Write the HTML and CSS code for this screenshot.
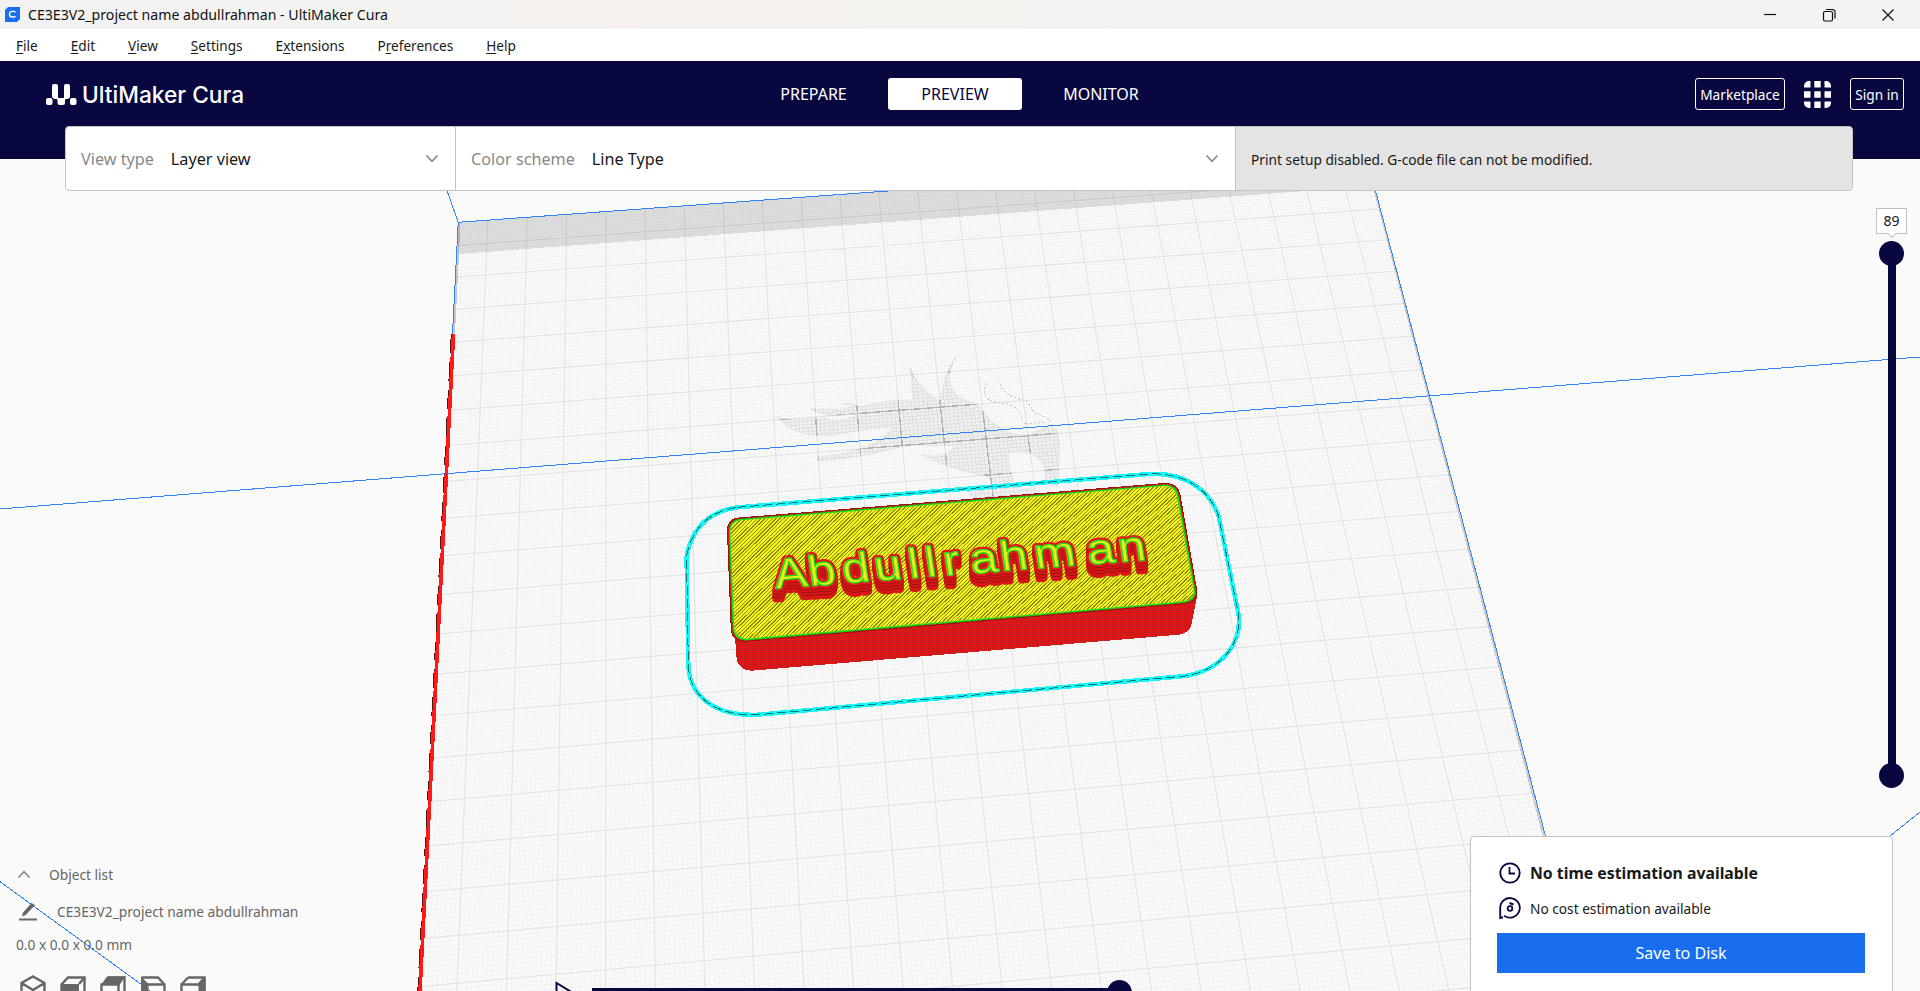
FILE: index.html
```html
<!DOCTYPE html>
<html lang="en">
<head>
<meta charset="utf-8">
<title>CE3E3V2_project name abdullrahman - UltiMaker Cura</title>
<link rel="stylesheet" href="styles.css">
</head>
<body>
<div class="app">
  <div class="titlebar">
    <svg class="app-icon" width="15" height="15" viewBox="0 0 15 15"><path d="M3 0H15V12L12 15H0V3Z" fill="#196ef0"/><path d="M10.5 5.2A3 3 0 0 0 8.700 4.400H7.300A2.800 2.800 0 0 0 7.300 10H8.700A3 3 0 0 0 10.500 9.200" fill="none" stroke="#fff" stroke-width="1.400"/></svg>
    <span class="title">CE3E3V2_project name abdullrahman - UltiMaker Cura</span>
    <div class="window-controls">
      <svg width="14" height="14" viewBox="0 0 14 14"><path d="M1 6.500H13" /></svg>
      <svg width="14" height="14" viewBox="0 0 14 14"><rect x="1.500" y="3.500" width="9" height="9.500" rx="1.500"/><path d="M4 1.500H10.500A2.500 2.500 0 0 1 13 4V10.500"/></svg>
      <svg width="14" height="14" viewBox="0 0 14 14"><path d="M1.500 1.500L12.500 12.500M12.500 1.500L1.500 12.500"/></svg>
    </div>
  </div>
  <nav class="menubar">
    <span><u>F</u>ile</span><span><u>E</u>dit</span><span><u>V</u>iew</span><span><u>S</u>ettings</span><span>E<u>x</u>tensions</span><span>P<u>r</u>eferences</span><span><u>H</u>elp</span>
  </nav>
  <header class="header">
    <div class="brand">
      <svg width="31" height="21" viewBox="0 0 31 21" fill="#fff"><rect x="0" y="14" width="6.500" height="7" rx="2"/><rect x="24" y="14" width="6.500" height="7" rx="2"/><path d="M6 2a2 2 0 0 1 2-2h2a2 2 0 0 1 2 2v11c0 1 1 1 1.500 1h3.500c.500 0 1 0 1-1V2a2 2 0 0 1 2-2h2a2 2 0 0 1 2 2v10c0 2-1 3-3 3-1 0-2 0-2 1v3a2 2 0 0 1-2 2h-3.500a2 2 0 0 1-2-2v-3c0-1-1-1-2-1-2 0-3.500-1-3.500-3Z"/></svg>
      <span class="brand-name">UltiMaker Cura</span>
    </div>
    <div class="stages">
      <span class="stage">PREPARE</span><span class="stage active">PREVIEW</span><span class="stage">MONITOR</span>
    </div>
    <div class="account">
      <span class="outline market">Marketplace</span>
      <svg width="27" height="27" viewBox="0 0 27 27" fill="#fff"><path d="M0 6.500V5A5 5 0 0 1 5 0H6.500V6.500ZM10.300 0h6.400v6.500h-6.400ZM20.500 0H22a5 5 0 0 1 5 5V6.500H20.500ZM0 10.300h6.500v6.400H0ZM10.300 10.300h6.400v6.400h-6.400ZM20.500 10.300H27v6.400H20.500ZM0 20.500H6.500V27H5A5 5 0 0 1 0 22ZM10.300 20.500h6.400V27h-6.400ZM20.500 20.500H27V22a5 5 0 0 1-5 5H20.500Z"/></svg>
      <span class="outline signin">Sign in</span>
    </div>
  </header>
  <main class="viewport">
    <svg class="scene" width="1920" height="832" viewBox="0 159 1920 832">
      <defs>
        <pattern id="wall" width="2" height="2" patternUnits="userSpaceOnUse" patternTransform="scale(2.6133 3)"><rect width="2" height="2" fill="#f01919"/><rect width="1" height="1" fill="#b81414"/><rect x="1" y="1" width="1" height="1" fill="#d01616"/></pattern>
        <clipPath id="topClip"><path transform="translate(680 340) scale(.38265 .33333)" d="M160 541L1268 438Q1292 440 1298 466L1343 755Q1343 778 1316 784L174 896Q147 895 142 866L132 574Q134 544 160 541Z"/></clipPath>
        <path id="dragonShape" transform="translate(680 340) scale(.38265 .33333)" d="M252 228C290 245 330 238 378 232C400 250 440 238 462 222L400 228C370 222 350 215 338 203C370 212 420 210 455 197L415 190C450 188 465 198 478 200C510 184 560 180 608 182L602 85C620 135 650 165 678 180L686 150C690 115 700 90 718 55C704 100 702 120 706 135C720 170 745 185 775 190C795 215 805 240 840 265C860 280 885 288 905 284C935 275 950 262 970 255C985 265 992 285 992 310L990 440L957 432C955 400 950 370 935 352C920 338 890 334 862 338C850 365 870 390 872 430L892 446L925 442L925 462L760 475L750 450L812 442L808 412C770 400 700 385 662 362L628 345C660 348 700 352 716 318C660 318 610 314 575 322C500 345 440 358 360 364L358 350C420 345 470 332 520 300L560 262C500 266 450 276 410 286C350 292 300 280 275 255Z"/>
        <clipPath id="dragonClip"><use href="#dragonShape"/></clipPath>
      </defs>
      <path id="plate" class="plate"/>
      <path id="minor" class="minor"/>
      <path id="major" class="major"/>
      <g clip-path="url(#dragonClip)">
        <path d="M700 340H1080V520H700Z" class="dragon-fill"/>
        <path id="dragonMinor" class="dragon-minor"/>
        <path id="dragonMajor" class="dragon-major"/>
        <use href="#dragonShape" class="dragon-rim"/>
      </g>
      <g class="dragon-hair" transform="translate(680 340) scale(.38265 .33333)">
        <path d="M800 128C790 160 800 180 825 187C870 190 890 210 892 230Q895 250 910 255M836 132C845 165 880 175 903 182C920 200 920 215 935 224Q968 230 970 255M905 250L950 248M718 55L700 95M602 85L612 115"/>
      </g>
      <path class="shade" d="M458 222L892 190H1320L458 254Z"/>
      <path class="edge-shadow" d="M1375 191L1544 837M459.500 224L454 333"/>
      <path class="volume" d="M446.800 190L458.200 222.300L890.700 190.800M458.200 222.300L452.500 334M1375.600 191L1545.700 837M0 509L1920 357M0 881.700L151 991.500M1920 812L1885 840"/>
      <path d="M453 334L419.500 991" class="prime-dark"/>
      <path d="M453.500 334L420 991" class="prime"/>
      <g transform="translate(680 340) scale(.38265 .33333)">
        <path class="skirt" d="M150 502L1225 402C1330 396 1388 460 1408 530L1460 825C1468 905 1420 990 1320 1008L205 1124C90 1130 30 1070 22 985L17 650C30 570 70 515 150 502Z"/>
        <path class="skirt-line" d="M150 502L1225 402C1330 396 1388 460 1408 530L1460 825C1468 905 1420 990 1320 1008L205 1124C90 1130 30 1070 22 985L17 650C30 570 70 515 150 502Z"/>
        <path class="block-side" d="M122 570L148 955Q154 992 188 992L1305 884Q1333 878 1337 850L1352 765Z"/>
        <path class="block-top-dark" d="M155 534L1270 430Q1300 432 1306 460L1351 755Q1352 785 1320 791L170 904Q138 904 134 870L124 570Q126 536 155 534Z"/>
        <path class="block-rim" d="M158 537L1270 434Q1296 436 1302 462L1347 755Q1348 782 1318 788L172 901Q142 900 138 868L128 572Q130 540 158 537Z"/>
      </g>
      <g clip-path="url(#topClip)">
        <path class="skin" d="M720 480H1205V650H720Z"/>
        <path id="skinLines" class="skin-lines"/>
      </g>
      <g id="letters"></g>
    </svg>

    <section class="toolbar">
      <div class="cell view-type"><span class="label">View type</span><span class="value">Layer view</span><svg class="chev" width="14" height="9" viewBox="0 0 14 9"><path d="M1.500 1.500L7 7.300L12.500 1.500"/></svg></div>
      <div class="cell scheme"><span class="label">Color scheme</span><span class="value">Line Type</span><svg class="chev" width="14" height="9" viewBox="0 0 14 9"><path d="M1.500 1.500L7 7.300L12.500 1.500"/></svg></div>
      <div class="cell disabled"><span>Print setup disabled. G-code file can not be modified.</span></div>
    </section>

    <div class="layer-slider">
      <div class="layer-value">89</div>
      <div class="layer-track"><i class="knob"></i><i class="knob"></i></div>
    </div>

    <section class="objects">
      <div class="obj-head"><svg width="14" height="9" viewBox="0 0 14 9"><path d="M1.500 7.500L7 1.700L12.500 7.500" fill="none" stroke="#888" stroke-width="1.700"/></svg><span>Object list</span></div>
      <div class="obj-name"><svg width="18" height="19" viewBox="0 0 18 19" fill="#666"><path d="M3 14.500L4 10.500L12.500 1L16 3L7 12.800ZM0 16.500H18V18.500H0Z"/></svg><span>CE3E3V2_project name abdullrahman</span></div>
      <div class="obj-dim">0.0 x 0.0 x 0.0 mm</div>
      <div class="view-icons">
        <svg viewBox="0 0 26 28"><path d="M13 1.500L24.500 8V20L13 26.500L1.500 20V8ZM1.500 8L13 15L24.500 8M13 15V26"/></svg>
        <svg viewBox="0 0 26 28"><path d="M8 2.500H24.500V20L18.500 26H1.500V9.500Z"/><path class="solid" d="M1 9H19V27H1Z"/><path d="M19 9L24.500 2.500"/></svg>
        <svg viewBox="0 0 26 28"><path d="M8 2.500H24.500V20L18.500 26H1.500V9.500H18.500V26"/><path class="solid" d="M7 1.500H25.500L19.500 10H1Z"/></svg>
        <svg viewBox="0 0 26 28"><path d="M1.500 2.500H18L24.500 9.500V26H7.500M8 9.500H24.500"/><path class="solid" d="M1 1.500L8.500 9V27H1Z"/></svg>
        <svg viewBox="0 0 26 28"><path d="M8 2.500H24.500V20L18.500 26H1.500V9.500H18.500L24.500 2.500M1.500 9.500L8 2.500"/><path class="solid" d="M18.500 9L25.500 2V20L18.500 27Z"/></svg>
      </div>
    </section>

    <div class="sim">
      <svg width="20" height="24" viewBox="0 0 20 24"><path d="M1.500 2V22L18 12Z" fill="none" stroke="#08073f" stroke-width="2"/></svg>
      <div class="sim-track"><i class="knob"></i></div>
    </div>

    <section class="output">
      <div class="est time"><svg width="22" height="22" viewBox="0 0 22 22"><circle cx="11" cy="11" r="9.700"/><path d="M10.500 5V11.500H16"/></svg><b>No time estimation available</b></div>
      <div class="est cost"><svg width="22" height="22" viewBox="0 0 22 22"><path d="M1.200 22V11A9.800 9.800 0 1 1 5 18.600M1.200 20.500H4"/><circle cx="11" cy="11.500" r="2.300"/><path d="M10.500 6L14.500 7.500" stroke-width="2.200"/></svg><span>No cost estimation available</span></div>
      <div class="save"><span>Save to Disk</span></div>
    </section>
  </main>
</div>
<script src="scene.js"></script>
</body>
</html>
```
FILE: styles.css
```css
* { box-sizing: border-box; }
body { margin: 0; font-family: "Noto Sans", "Open Sans", sans-serif; color: #191919; overflow: hidden; }
.app { width: 1920px; height: 991px; display: flex; flex-direction: column; background: #fafafa; overflow: hidden; }
.app span, .app b, .obj-dim, .layer-value { white-space: nowrap; }

.titlebar { height: 29px; flex: none; display: flex; align-items: center; padding-left: 5px; background: linear-gradient(90deg, #f2f2f2 0, #f3f3f2 380px, #f6f1ee 620px, #f4f2ee 900px, #f3f3f1 1100px, #f3f2f0); }
.title { margin-left: 8px; font-size: 14.13px; color: #111; }
.window-controls { margin-left: auto; margin-right: 25px; display: flex; gap: 45px; }
.window-controls svg { fill: none; stroke: #111; stroke-width: 1.2; }

.menubar { height: 32px; flex: none; display: flex; align-items: center; padding-left: 16px; background: #fff; font-size: 13.6px; gap: 33px; }
.menubar u { text-underline-offset: 2px; }

.header { height: 98px; flex: none; background: #08073f; color: #fff; display: grid; grid-template-columns: 734px 1fr auto; align-items: start; padding: 17px 16px 0 46px; }
.brand { display: flex; align-items: center; height: 32px; gap: 5px; }
.brand-name { font: 500 22.7px "Inter", "Liberation Sans", sans-serif; }
.stages { display: flex; height: 32px; }
.stage { width: 134px; line-height: 32px; text-align: center; font-size: 16px; margin-right: 12px; }
.stage:first-child { width: 67px; margin-right: 41px; }
.stage.active { background: #fff; color: #08073f; border-radius: 3px; }
.account { display: flex; align-items: center; height: 32px; gap: 19px; }
.outline { height: 32px; border: 1px solid #fff; border-radius: 3px; line-height: 31px; text-align: center; font-size: 13.7px; }
.market { width: 90px; }
.signin { width: 54px; }

.viewport { position: relative; flex: 1; }
.scene { position: absolute; inset: 0; shape-rendering: crispEdges; }
.plate { fill: #f9f9f9; }
.minor { stroke: #f3f3f3; stroke-width: 1; fill: none; }
.major { stroke: #e4e4e4; stroke-width: 1.2; fill: none; shape-rendering: auto; }
.dragon-fill { fill: #f0f0f0; }
.dragon-minor { stroke: #e0e0e0; fill: none; }
.dragon-major { stroke: #b4b4b4; stroke-width: 1.4; fill: none; }
.dragon-rim { fill: none; stroke: #e0e0e0; stroke-width: 3; }
.dragon-hair path { stroke: #c8c8c8; fill: none; vector-effect: non-scaling-stroke; stroke-dasharray: 2 2; }
.shade { fill: #000; fill-opacity: .11; }
.edge-shadow { stroke: #000; stroke-opacity: .18; stroke-width: 2; fill: none; }
.volume { stroke: #3282ff; stroke-width: 1; fill: none; }
.prime { stroke: #ff1919; stroke-width: 3.6; }
.prime-dark { stroke: #5a1414; stroke-width: 4.4; stroke-dasharray: 19 9; }
.skirt, .skirt-line, .block-rim, .block-top-dark { vector-effect: non-scaling-stroke; }
.skirt { fill: none; stroke: #19f5f5; stroke-width: 4.4; }
.skirt-line { fill: none; stroke: #0a7a7a; stroke-width: 1; stroke-dasharray: 9 4; }
.block-side { fill: url(#wall); }
.block-top-dark { fill: #e01616; stroke: #a01212; stroke-width: 1; }
.block-rim { fill: #19e019; stroke: #18a018; stroke-width: .5; }
.skin { fill: #f4f41a; }
.skin-lines { stroke: #8c8c10; stroke-width: 1; fill: none; }
.model-text { font: 42px "Liberation Sans", Arial, sans-serif; stroke-linejoin: round; shape-rendering: auto; }
.text-wall { fill: #d81616; stroke: #d81616; stroke-width: 6; }
.text-wall.dark { fill: #981212; stroke: #981212; }
.text-edge { fill: #e41919; stroke: #e41919; stroke-width: 6; }
.text-rim { fill: #19d819; stroke: #19d819; stroke-width: 1.6; }
.text-face { fill: #e6f01a; stroke: #19d819; stroke-width: .9; }

.toolbar { position: absolute; left: 65px; top: -33px; width: 1788px; height: 65px; display: grid; grid-template-columns: 390px 780px 1fr; border: 1px solid #c4c4c4; border-radius: 4px; background: #fff; overflow: hidden; }
.cell { display: flex; align-items: center; padding: 0 16px 0 15px; border-right: 1px solid #c4c4c4; font-size: 16.2px; }
.cell:last-child { border-right: 0; }
.label { color: #888; margin-right: 17px; }
.chev { margin-left: auto; fill: none; stroke: #888; stroke-width: 1.7; }
.disabled { background: #e4e4e4; font-size: 13.75px; padding-top: 2px; }

.layer-slider { position: absolute; left: 1876px; top: 49px; width: 31px; display: flex; flex-direction: column; align-items: center; gap: 7px; }
.layer-value { position: relative; width: 31px; height: 26px; background: #fff; border: 1px solid #c0c0c0; font-size: 14px; line-height: 24px; text-align: center; }
.layer-value::after { content: ""; position: absolute; left: 12px; top: 22px; width: 5px; height: 5px; background: #fff; border: solid #c0c0c0; border-width: 0 1px 1px 0; transform: rotate(45deg); }
.layer-track { width: 8px; height: 547px; display: flex; flex-direction: column; justify-content: space-between; align-items: center; background: linear-gradient(#08073f, #08073f) 0 12px / 8px 523px no-repeat; }
.knob { width: 25px; height: 25px; flex: none; border-radius: 50%; background: #08073f; }

.objects { position: absolute; left: 16px; bottom: -12px; display: flex; flex-direction: column; color: #666; font-size: 13.73px; }
.obj-head { display: flex; align-items: center; height: 24px; padding-left: 1px; gap: 18px; }
.obj-name { display: flex; align-items: center; height: 26px; margin-top: 12px; padding-left: 3px; gap: 20px; }
.obj-dim { height: 24px; line-height: 24px; margin-top: 9px; }
.view-icons { display: flex; gap: 14px; margin: 18px 0 0 4px; }
.view-icons svg { width: 26px; height: 28px; fill: none; stroke: #666; stroke-width: 2.4; }
.view-icons .solid { fill: #666; stroke: none; }

.sim { position: absolute; left: 555px; bottom: -14px; display: flex; align-items: center; gap: 17px; }
.sim-track { width: 540px; height: 25px; display: flex; justify-content: flex-end; background: linear-gradient(#08073f, #08073f) 0 8px / 526px 8px no-repeat; }

.output { position: absolute; left: 1470px; top: 677px; width: 423px; height: 170px; background: #fff; border: 1px solid #c4c4c4; border-radius: 4px; padding: 22px 27px 0 26px; }
.est { display: flex; align-items: center; gap: 9px; height: 28px; padding-left: 2px; }
.est svg { fill: none; stroke: #08073f; stroke-width: 1.8; }
.time { font-size: 15.8px; }
.cost { font-size: 13.7px; margin-top: 7px; }
.save { margin-top: 11px; height: 40px; background: #196ef0; color: #fff; font-size: 16.1px; line-height: 40px; text-align: center; }
```
FILE: scene.js
```javascript
// Perspective projection of the 235 x 235 mm build plate, measured from its back-left corner.
function project(u, v) {
  var w = 1 + 0.0000987 * u - 0.0010397 * v;
  return ((458.2 + 3.9986 * u - 0.6308 * v) / w).toFixed(2) + " " +
         ((222.3 - 0.2641 * u + 2.8445 * v) / w).toFixed(2);
}
var SIZE = 235;
function gridPath(start, step) {
  var d = "";
  for (var t = start; t < SIZE; t += step) {
    d += "M" + project(t, 0) + "L" + project(t, SIZE) + "M" + project(0, t) + "L" + project(SIZE, t);
  }
  return d;
}
function setPath(id, d) { document.getElementById(id).setAttribute("d", d); }

setPath("plate", "M" + project(0, 0) + "L" + project(SIZE, 0) + "L" + project(SIZE, SIZE) + "L" + project(0, SIZE) + "Z");
var minor = gridPath(0.5, 1), major = gridPath(7.5, 10);
setPath("minor", minor);
setPath("major", major);
setPath("dragonMinor", minor);
setPath("dragonMajor", major);

// Diagonal skin lines on the top face.
var skin = "";
for (var k = 0; k < 185; k += 1) {
  skin += "M" + (720 + k * 3.8).toFixed(1) + " 480L" + (550 + k * 3.75).toFixed(1) + " 650";
}
setPath("skinLines", skin);

// Raised lettering: stacked wall layers, then the outlined top face.
var letters = document.getElementById("letters");
var xs = [-1, 33, 67, 99, 133, 150, 168, 195, 225, 259, 312, 343].map(function (x) {
  return (x / 1.17).toFixed(1);
}).join(" ");
function addText(cls, dy) {
  var t = document.createElementNS("http://www.w3.org/2000/svg", "text");
  t.setAttribute("class", "model-text " + cls);
  t.setAttribute("x", xs);
  t.setAttribute("transform", "matrix(1.17 -.0907 .15 1 777 " + (588.5 + dy) + ")");
  t.textContent = "Abdullrahman";
  if (dy) t.setAttribute("aria-hidden", "true");
  letters.appendChild(t);
}
for (var i = 11; i > 0; i -= 1) addText("text-wall" + (i === 1 || i === 4 || i === 7 ? " dark" : ""), i);
addText("text-edge", 0);
addText("text-rim", 0);
addText("text-face", 0);
```
